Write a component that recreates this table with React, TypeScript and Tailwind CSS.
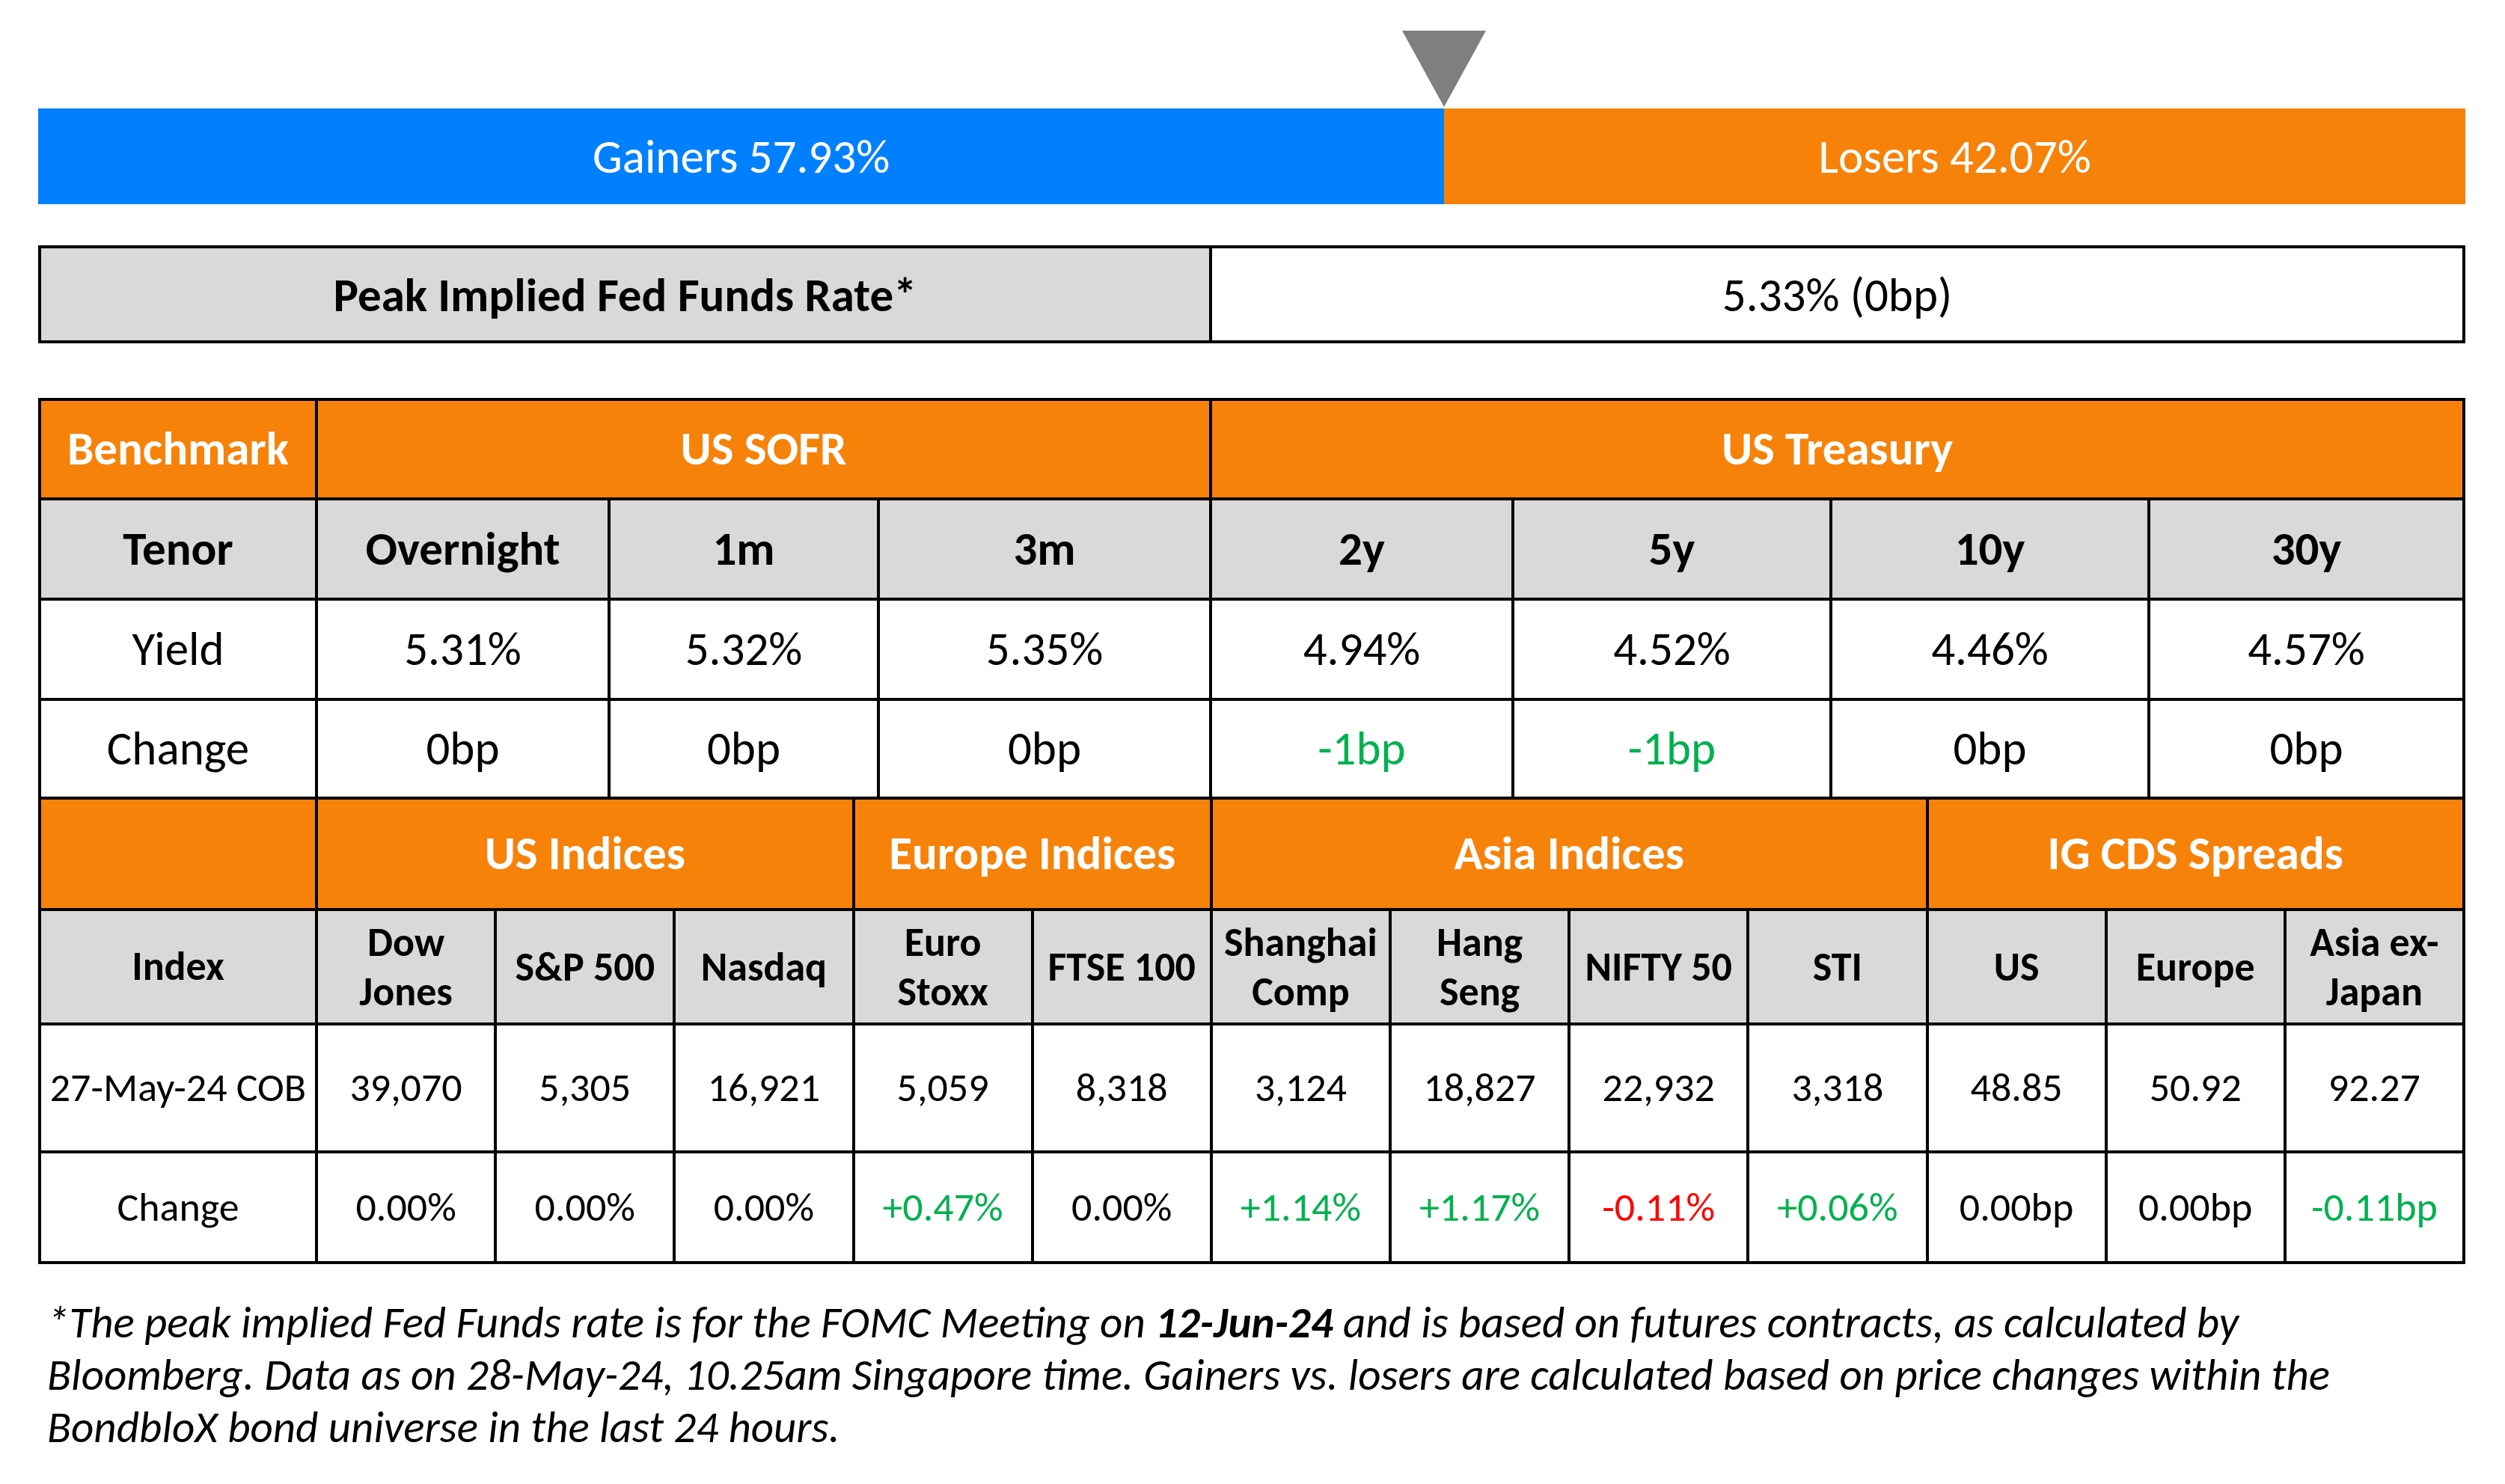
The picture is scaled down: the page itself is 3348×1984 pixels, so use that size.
import React from 'react';

const FONT = "font-['Carlito','Lato','Open_Sans',sans-serif]";

const gainers = 57.93;
const losers = 42.07;

const sofr = [
  { tenor: 'Overnight', yld: '5.31%', chg: '0bp', tone: 'flat' },
  { tenor: '1m', yld: '5.32%', chg: '0bp', tone: 'flat' },
  { tenor: '3m', yld: '5.35%', chg: '0bp', tone: 'flat' },
];

const treasury = [
  { tenor: '2y', yld: '4.94%', chg: '-1bp', tone: 'up' },
  { tenor: '5y', yld: '4.52%', chg: '-1bp', tone: 'up' },
  { tenor: '10y', yld: '4.46%', chg: '0bp', tone: 'flat' },
  { tenor: '30y', yld: '4.57%', chg: '0bp', tone: 'flat' },
];

const indices = [
  { name: ['Dow', 'Jones'], level: '39,070', chg: '0.00%', tone: 'flat' },
  { name: ['S&P 500'], level: '5,305', chg: '0.00%', tone: 'flat' },
  { name: ['Nasdaq'], level: '16,921', chg: '0.00%', tone: 'flat' },
  { name: ['Euro', 'Stoxx'], level: '5,059', chg: '+0.47%', tone: 'up' },
  { name: ['FTSE 100'], level: '8,318', chg: '0.00%', tone: 'flat' },
  { name: ['Shanghai', 'Comp'], level: '3,124', chg: '+1.14%', tone: 'up' },
  { name: ['Hang', 'Seng'], level: '18,827', chg: '+1.17%', tone: 'up' },
  { name: ['NIFTY 50'], level: '22,932', chg: '-0.11%', tone: 'down' },
  { name: ['STI'], level: '3,318', chg: '+0.06%', tone: 'up' },
  { name: ['US'], level: '48.85', chg: '0.00bp', tone: 'flat' },
  { name: ['Europe'], level: '50.92', chg: '0.00bp', tone: 'flat' },
  { name: ['Asia ex-', 'Japan'], level: '92.27', chg: '-0.11bp', tone: 'up' },
];

const toneClass = (tone: string) =>
  tone === 'up' ? 'text-[#00b050]' : tone === 'down' ? 'text-[#ff0000]' : 'text-black';

const Cell = ({ className = '', children }: { className?: string; children?: React.ReactNode }) => (
  <div className={`flex items-center justify-center text-center whitespace-nowrap ${className}`}>{children}</div>
);

const App = () => {
  return (
    <div className={`w-[3348px] h-[1984px] bg-white ${FONT} text-black`}>
      <div className="w-[3244px] ml-[51px] pt-[41px]">
        {/* gainers / losers split marker */}
        <div className="h-[104px] relative">
          <svg
            className="absolute top-0 -translate-x-1/2"
            style={{ left: `${gainers}%` }}
            width="112"
            height="102"
            viewBox="0 0 112 102"
          >
            <polygon points="0,0 112,0 56,102" fill="#7f7f7f" />
          </svg>
        </div>

        <div className="flex h-[128px] text-white text-[63px]">
          <div className="bg-[#0080ff] flex items-center justify-center pt-[2px]" style={{ width: `${gainers}%` }}>
            Gainers {gainers.toFixed(2)}%
          </div>
          <div className="bg-[#f7820a] flex items-center justify-center pt-[2px]" style={{ width: `${losers}%` }}>
            Losers {losers.toFixed(2)}%
          </div>
        </div>

        {/* peak implied rate */}
        <div className="mt-[55px] h-[131px] bg-black p-[4px] flex gap-[4px] text-[63px]">
          <Cell className="w-[1561px] bg-[#d9d9d9] font-bold pt-[4px]">Peak Implied Fed Funds Rate*</Cell>
          <Cell className="flex-1 bg-white pt-[4px]">5.33% (0bp)</Cell>
        </div>

        {/* benchmarks + indices */}
        <div className="mt-[73px] bg-black p-[4px] flex flex-col gap-[4px]">
          <div className="grid grid-cols-[366px_387px_356px_440px_400px_421px_421px_417px] grid-rows-[129px_130px_130px_128px] gap-[4px] text-[63px]">
            <Cell className="bg-[#f7820a] text-white font-bold">Benchmark</Cell>
            <Cell className="col-span-3 bg-[#f7820a] text-white font-bold">US SOFR</Cell>
            <Cell className="col-span-4 bg-[#f7820a] text-white font-bold">US Treasury</Cell>

            <Cell className="bg-[#d9d9d9] font-bold">Tenor</Cell>
            {[...sofr, ...treasury].map((r) => (
              <Cell key={r.tenor} className="bg-[#d9d9d9] font-bold">{r.tenor}</Cell>
            ))}

            <Cell className="bg-white">Yield</Cell>
            {[...sofr, ...treasury].map((r) => (
              <Cell key={r.tenor} className="bg-white">{r.yld}</Cell>
            ))}

            <Cell className="bg-white">Change</Cell>
            {[...sofr, ...treasury].map((r) => (
              <Cell key={r.tenor} className={`bg-white ${toneClass(r.tone)}`}>{r.chg}</Cell>
            ))}
          </div>

          <div className="grid grid-cols-[366px_repeat(12,minmax(0,1fr))] grid-rows-[145px_149px_167px_144px] gap-[4px] text-[54px]">
            <Cell className="bg-[#f7820a]" />
            <Cell className="col-span-3 bg-[#f7820a] text-white font-bold text-[63px]">US Indices</Cell>
            <Cell className="col-span-2 bg-[#f7820a] text-white font-bold text-[63px]">Europe Indices</Cell>
            <Cell className="col-span-4 bg-[#f7820a] text-white font-bold text-[63px]">Asia Indices</Cell>
            <Cell className="col-span-3 bg-[#f7820a] text-white font-bold text-[63px]">IG CDS Spreads</Cell>

            <Cell className="bg-[#d9d9d9] font-bold">Index</Cell>
            {indices.map((r) => (
              <Cell key={r.name.join(' ')} className="bg-[#d9d9d9] font-bold leading-[66px] flex-col">
                {r.name.map((part) => (
                  <span key={part}>{part}</span>
                ))}
              </Cell>
            ))}

            <Cell className="bg-white">27-May-24 COB</Cell>
            {indices.map((r) => (
              <Cell key={r.name.join(' ')} className="bg-white">{r.level}</Cell>
            ))}

            <Cell className="bg-white">Change</Cell>
            {indices.map((r) => (
              <Cell key={r.name.join(' ')} className={`bg-white ${toneClass(r.tone)}`}>{r.chg}</Cell>
            ))}
          </div>
        </div>

        {/* footnote */}
        <p className="mt-[43px] ml-[12px] italic text-[59px] leading-[70px]">
          *The peak implied Fed Funds rate is for the FOMC Meeting on <span className="font-bold">12-Jun-24</span> and is based on futures contracts, as calculated by
          <br />
          Bloomberg. Data as on 28-May-24, 10.25am Singapore time. Gainers vs. losers are calculated based on price changes within the
          <br />
          BondbloX bond universe in the last 24 hours.
        </p>
      </div>
    </div>
  );
};

export default App;
